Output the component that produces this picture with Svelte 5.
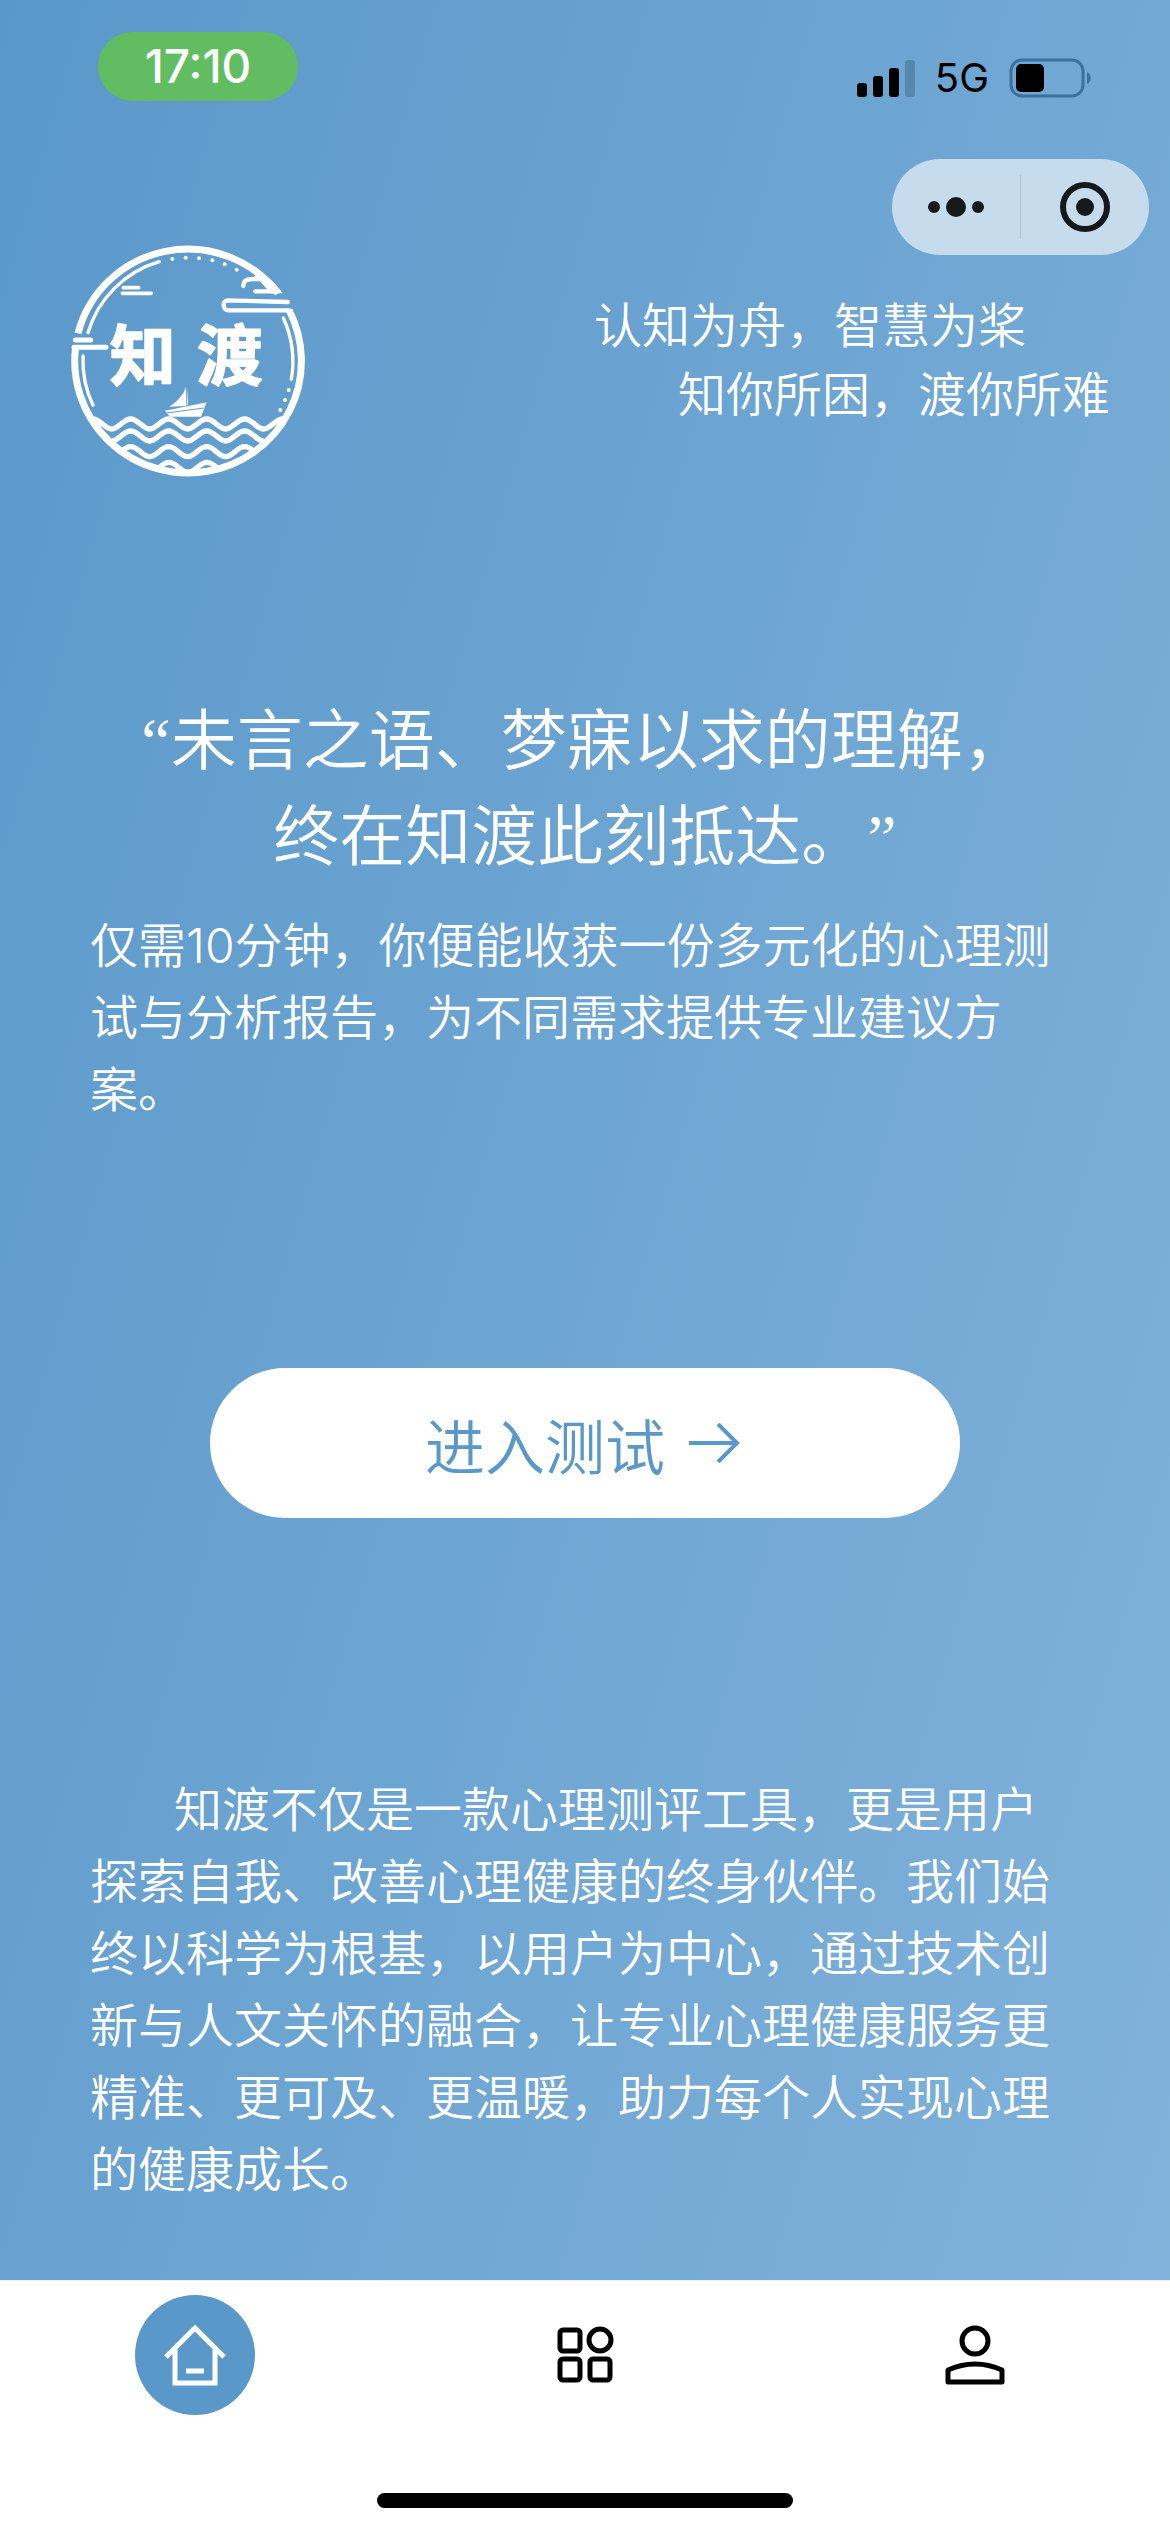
<script>
    let active = $state("home");

    const signal = [14, 21, 29, 37];

    // dotted parts of the logo ring
    const dots = [
        [337, 87],
        [377, 83],
        [417, 85],
        [457, 91],
        [494, 103],
        [530, 119],
        [686, 480],
        [675, 510],
        [661, 540],
    ];

    // trough at x, then a crest half a period later
    function wave(x, y, count, amp = 15) {
        let d = `M${x} ${y + amp}`;
        for (let i = 0; i < count; i++) {
            d += ` c22 0 34 ${-2 * amp} 57 ${-2 * amp} s35 ${2 * amp} 57 ${2 * amp}`;
        }
        return d;
    }

    const waves = [
        wave(41, 582, 6),
        wave(155, 618, 4),
        wave(155, 665, 4),
        wave(270, 712, 2),
    ];
</script>

<div class="page">
    <div class="status">
        <span class="time">17:10</span>
        <div class="phone">
            <div class="signal">
                {#each signal as height, i}
                    <i class:off={i === 3} style="height: {height}px"></i>
                {/each}
            </div>
            <span class="network">5G</span>
            <svg class="battery" viewBox="0 0 84 40" aria-hidden="true">
                <rect x="2" y="2" width="72" height="36" rx="11" fill="none" stroke="#3e719b" stroke-width="3" />
                <rect x="7" y="6" width="28" height="28" rx="5" fill="#000" />
                <path d="M78 14c5 2 5 10 0 12z" fill="#3e719b" />
            </svg>
        </div>
    </div>

    <header>
        <svg class="logo" viewBox="30 36 720 720" role="img" aria-label="知渡">
            <defs>
                <clipPath id="ring">
                    <ellipse cx="384" cy="392" rx="346" ry="342" />
                </clipPath>
            </defs>
            <g fill="none" stroke="#fff" stroke-width="21">
                <path d="M54 310 A340 336 0 0 1 654 190" />
                <path d="M687 240 A340 336 0 1 1 47 350" />
            </g>
            <g fill="none" stroke="#fff" stroke-width="10" stroke-linecap="round">
                <path d="M84 308 A316 316 0 0 1 298 95" />
                <path d="M69 378 A316 316 0 0 0 99 526" />
                <path d="M670 264 A316 316 0 0 1 694 448" />
                <path d="M190 173H236M187 190H274" stroke-width="11" />
                <path d="M46 330H92M42 352H138" stroke-width="15" />
                <path d="M550 168C550 150 562 147 582 147H606" stroke-width="13" />
                <path d="M586 184H654" stroke-width="13" />
                <path d="M684 216L504 211C486 211 486 241 506 241H688" stroke-width="13" />
            </g>
            <path d="M580 141L612 132Q646 158 668 190H630L616 172L600 154Z" fill="#fff" />
            {#each dots as [x, y]}
                <circle cx={x} cy={y} r="6" fill="#fff" />
            {/each}
            <text class="logo-text" x="149" y="450">知</text>
            <text class="logo-text" x="410" y="450">渡</text>
            <path d="M378 470V528L328 530Q368 504 378 470ZM381 470L384 524L380 526Z" fill="#fff" />
            <path d="M315 542L440 517L423 560H330Z" fill="#fff" />
            <path d="M320 549L432 534" stroke="#5f9dcd" stroke-width="3" />
            <g clip-path="url(#ring)" fill="none" stroke="#fff" stroke-width="16">
                {#each waves as d}
                    <path {d} />
                {/each}
            </g>
        </svg>

        <div class="side">
            <div class="capsule">
                <button aria-label="更多">
                    <svg viewBox="0 0 56 52">
                        <circle cx="6" cy="26" r="6" />
                        <circle cx="28" cy="26" r="10" />
                        <circle cx="50" cy="26" r="6" />
                    </svg>
                </button>
                <button aria-label="关闭">
                    <svg viewBox="0 0 52 52">
                        <circle cx="26" cy="26" r="22" fill="none" stroke="#15191c" stroke-width="6" />
                        <circle cx="26" cy="26" r="9" />
                    </svg>
                </button>
            </div>
            <p class="slogan">认知为舟，智慧为桨</p>
            <p class="slogan second">知你所困，渡你所难</p>
        </div>
    </header>

    <main>
        <h1>“未言之语、梦寐以求的理解，<br />终在知渡此刻抵达。”</h1>
        <p class="lead">仅需10分钟，你便能收获一份多元化的心理测试与分析报告，为不同需求提供专业建议方案。</p>

        <button class="start">
            进入测试
            <svg viewBox="0 0 56 40" aria-hidden="true">
                <path d="M0 20H48M29 1L48 20L29 39" />
            </svg>
        </button>

        <p class="about">知渡不仅是一款心理测评工具，更是用户探索自我、改善心理健康的终身伙伴。我们始终以科学为根基，以用户为中心，通过技术创新与人文关怀的融合，让专业心理健康服务更精准、更可及、更温暖，助力每个人实现心理的健康成长。</p>
    </main>

    <nav>
        <div class="tabs">
            <a href="#home" aria-label="首页" class:active={active === "home"} onclick={() => (active = "home")}>
                <svg viewBox="0 0 60 60">
                    <path d="M1 32L30 3L59 32M10 24V58H50V24M21 46H39" />
                </svg>
            </a>
            <a href="#tests" aria-label="测试" class:active={active === "tests"} onclick={() => (active = "tests")}>
                <svg viewBox="0 0 60 60">
                    <rect x="5" y="5" width="20" height="21" rx="3" />
                    <circle cx="45" cy="15" r="11" />
                    <rect x="5" y="34" width="20" height="21" rx="3" />
                    <rect x="35" y="34" width="20" height="21" rx="3" />
                </svg>
            </a>
            <a href="#me" aria-label="我的" class:active={active === "me"} onclick={() => (active = "me")}>
                <svg viewBox="0 0 60 60">
                    <circle cx="30" cy="16" r="13" />
                    <path d="M3 57V45Q30 33 57 45V57Z" />
                </svg>
            </a>
        </div>
        <div class="indicator"></div>
    </nav>
</div>

<style>
    .page {
        min-height: 100vh;
        display: flex;
        flex-direction: column;
        background: linear-gradient(106deg, #5a98ca, #82b3db);
        color: #fff;
        font-family: Inter, "Noto Sans CJK SC", sans-serif;
        font-weight: 350;
        text-spacing-trim: space-all;
    }

    p,
    h1 {
        margin: 0;
        font-weight: 350;
    }

    button {
        border: none;
        padding: 0;
        background: none;
        font: inherit;
        cursor: pointer;
    }

    /* Status bar */
    .status {
        height: 159px;
        box-sizing: border-box;
        padding: 32px 77px 0 98px;
        display: flex;
        justify-content: space-between;
        align-items: flex-start;
    }

    .time {
        width: 200px;
        line-height: 69px;
        border-radius: 35px;
        background: #62bd62;
        text-align: center;
        font-size: 46px;
        font-weight: 500;
    }

    .phone {
        display: flex;
        align-items: center;
        gap: 20px;
        padding-top: 26px;
        color: #000;
    }

    .signal {
        display: flex;
        align-items: flex-end;
        gap: 6px;
    }

    .signal i {
        width: 10px;
        border-radius: 3px;
        background: #000;
    }

    .signal .off {
        background: #5688ae;
    }

    .network {
        font-size: 40px;
        line-height: 40px;
        font-weight: 400;
    }

    .battery {
        width: 84px;
        height: 40px;
    }

    /* Logo, capsule and slogan */
    header {
        display: flex;
        justify-content: space-between;
        align-items: flex-start;
        padding-left: 70px;
    }

    .logo {
        width: 240px;
        height: 240px;
        margin-top: 83px;
    }

    .logo-text {
        font-family: "Noto Sans CJK SC", sans-serif;
        font-size: 198px;
        font-weight: 700;
        fill: #fff;
        stroke: #fff;
        stroke-width: 5px;
        stroke-linejoin: round;
    }

    .side {
        display: flex;
        flex-direction: column;
        align-items: flex-start;
    }

    .capsule {
        align-self: flex-end;
        display: flex;
        align-items: center;
        width: 257px;
        height: 96px;
        margin: 0 21px 36px 0;
        border-radius: 48px;
        background: #c6dced;
    }

    .capsule button {
        flex: 1;
        height: 64px;
        display: flex;
        align-items: center;
        justify-content: center;
    }

    .capsule button + button {
        border-left: 1px solid #abc4d9;
    }

    .capsule svg {
        height: 52px;
        fill: #15191c;
    }

    .slogan {
        font-size: 48px;
        line-height: 69px;
        padding-right: 60px;
    }

    .second {
        padding-left: 84px;
    }

    /* Content */
    main {
        flex: 1;
        padding: 212px 90px 74px;
    }

    /* serif first for the curly quotes only */
    h1 {
        font-family: "Liberation Serif", "Noto Sans CJK SC", sans-serif;
        font-size: 66px;
        line-height: 96px;
        text-align: center;
        white-space: nowrap;
    }

    .lead,
    .about {
        font-size: 48px;
        line-height: 72px;
    }

    .lead {
        margin-top: 24px;
    }

    .start {
        display: flex;
        align-items: center;
        justify-content: center;
        gap: 24px;
        width: 100%;
        max-width: 750px;
        height: 150px;
        margin: 242px auto 256px;
        border-radius: 75px;
        background: #fff;
        color: #5a98ca;
        font-size: 60px;
    }

    .start svg {
        width: 56px;
        height: 40px;
        fill: none;
        stroke: #5a98ca;
        stroke-width: 4;
    }

    .about {
        text-indent: 84px;
    }

    /* Tab bar */
    nav {
        border-top: 1px solid #eef1f2;
        background: #fff;
        padding-bottom: 24px;
    }

    .tabs {
        display: flex;
        justify-content: space-around;
        padding: 14px 0 78px;
    }

    .tabs a {
        width: 120px;
        height: 120px;
        display: flex;
        align-items: center;
        justify-content: center;
        border-radius: 50%;
        color: #000;
    }

    .tabs .active {
        background: #5a98ca;
        color: #fff;
    }

    .tabs svg {
        width: 60px;
        height: 60px;
        fill: none;
        stroke: currentColor;
        stroke-width: 5;
        stroke-linejoin: round;
        overflow: visible;
    }

    .tabs .active svg {
        stroke-linejoin: miter;
    }

    .indicator {
        width: 416px;
        height: 15px;
        margin: 0 auto;
        border-radius: 8px;
        background: #000;
    }
</style>
